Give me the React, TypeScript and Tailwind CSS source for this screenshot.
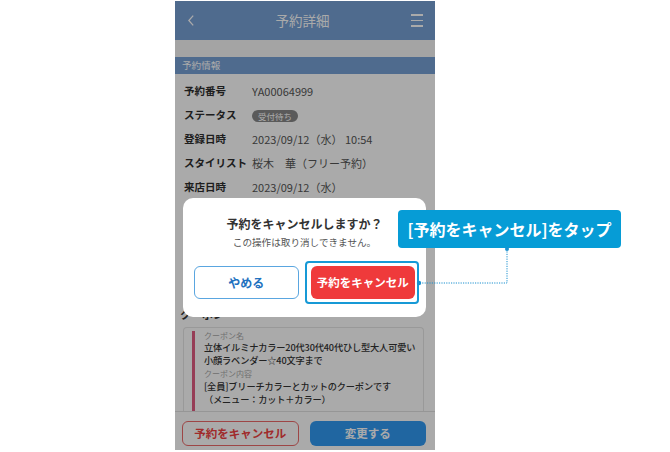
import React from "react";

const ROWS: { label: string; value: React.ReactNode }[] = [
  { label: "予約番号", value: "YA00064999" },
  {
    label: "ステータス",
    value: (
      <span className="inline-flex h-[12px] items-center rounded-full bg-[#878787] px-[6px] text-[8.5px] leading-none text-white">
        受付待ち
      </span>
    ),
  },
  { label: "登録日時", value: "2023/09/12（水） 10:54" },
  { label: "スタイリスト", value: "桜木　華（フリー予約）" },
];

const COUPON_LINES: { kind: "label" | "text"; body: string }[] = [
  { kind: "label", body: "クーポン名" },
  { kind: "text", body: "立体イルミナカラー20代30代40代ひし型大人可愛い" },
  { kind: "text", body: "小顔ラベンダー☆40文字まで" },
  { kind: "label", body: "クーポン内容" },
  { kind: "text", body: "[全員]ブリーチカラーとカットのクーポンです" },
  { kind: "text", body: "（メニュー：カット＋カラー）" },
];

function Header() {
  return (
    <div className="flex h-[39px] shrink-0 items-center justify-between bg-[#77a1d6] pl-[13px] pr-[12px]">
      <svg width="6" height="11" viewBox="0 0 6 11" fill="none">
        <polyline points="5.2,0.6 0.8,5.5 5.2,10.4" stroke="#fff" strokeWidth="1.3" />
      </svg>
      <span className="text-[13.5px] leading-none text-white">予約詳細</span>
      <div className="flex w-[12px] flex-col gap-[4px]">
        <span className="h-[1.5px] bg-white" />
        <span className="h-[1.5px] bg-white" />
        <span className="h-[1.5px] bg-white" />
      </div>
    </div>
  );
}

function Footer() {
  return (
    <div className="grid h-[39px] shrink-0 grid-cols-2 gap-[11px] border-t border-[#e2e2e2] bg-white pl-[7px] pr-[9px] pt-[9px]">
      <button className="flex h-[25px] items-center justify-center rounded-[6px] border border-[#ec6a6a] text-[11.5px] font-bold text-[#f04141]">
        予約をキャンセル
      </button>
      <button className="flex h-[25px] items-center justify-center rounded-[6px] bg-[#3199f2] text-[11.5px] font-bold text-white">
        変更する
      </button>
    </div>
  );
}

function CouponCard() {
  return (
    <div className="ml-[8px] mr-[11px] mt-[5px] h-[100px] overflow-hidden rounded-t-[4px] border border-b-0 border-[#e6e6e6] pl-[8px] pt-[3px]">
      <div className="h-[100px] border-l-[3px] border-[#e15c82] pl-[9px]">
        {COUPON_LINES.map((l, i) =>
          l.kind === "label" ? (
            <p key={i} className={`text-[8px] text-[#a9a9a9] ${i === 0 ? "leading-[10px]" : "leading-[13px]"}`}>
              {l.body}
            </p>
          ) : (
            <p key={i} className="whitespace-nowrap text-[9.2px] font-medium leading-[13px] tracking-[-0.15px] text-[#333]">
              {l.body}
            </p>
          )
        )}
      </div>
    </div>
  );
}

function ConfirmDialog() {
  return (
    <div className="absolute left-[8px] top-[197px] h-[119px] w-[243px] rounded-[10px] bg-white px-[11px] pt-[18px]">
      <p className="text-center text-[12px] font-bold leading-[16px] text-[#333]">予約をキャンセルしますか？</p>
      <p className="mt-[3px] text-center text-[9.6px] leading-[14px] text-[#555]">この操作は取り消しできません。</p>
      <div className="mt-[17px] grid grid-cols-2 gap-[12px]">
        <button className="flex h-[33px] items-center justify-center rounded-[6px] border border-[#5aa6e0] text-[12px] font-bold text-[#1f72c0]">
          やめる
        </button>
        <button className="flex h-[33px] items-center justify-center rounded-[6px] bg-[#ef3a3b] text-[11.5px] font-bold text-white">
          予約をキャンセル
        </button>
      </div>
    </div>
  );
}

export default function App() {
  return (
    <div className="relative h-[452px] w-[670px] overflow-hidden bg-white font-['Noto_Sans_CJK_JP',sans-serif]">
      {/* phone */}
      <div className="relative ml-[175px] mt-[1px] flex h-[449px] w-[260px] flex-col overflow-hidden bg-white">
        <Header />
        <div className="flex-1 overflow-hidden">
          <div className="h-[17px] bg-[#f6f6f6]" />
          <div className="h-[17px] bg-[#77a1d6] pl-[7px] text-[9.6px] leading-[17px] text-white">予約情報</div>
          <div className="pl-[9px] pt-[5px]">
            {ROWS.map((r) => (
              <div key={r.label} className="flex h-[24px] items-center">
                <span className="w-[68px] shrink-0 text-[10.5px] font-bold text-[#2e2e2e]">{r.label}</span>
                <span className="text-[11px] text-[#555]">{r.value}</span>
              </div>
            ))}
            <div className="flex pt-[5px]">
              <span className="w-[68px] shrink-0 text-[10.5px] font-bold leading-[14px] text-[#2e2e2e]">来店日時</span>
              <div className="text-[11px] leading-[14px] text-[#555]">
                <p>2023/09/12（水）</p>
              </div>
            </div>
          </div>
          <p className="ml-[5px] mt-[112px] text-[11px] font-bold leading-[16px] text-[#333]">クーポン</p>
          <CouponCard />
        </div>
        <Footer />

        {/* modal backdrop */}
        <div className="absolute inset-0 bg-black/[0.333]" />
        <ConfirmDialog />
      </div>

      {/* annotation */}
      <div className="absolute left-[305px] top-[261px] h-[43px] w-[114px] rounded-[4px] border-2 border-[#1699d6]" />
      <div className="absolute left-[398px] top-[210px] flex h-[38px] w-[223px] items-center justify-center rounded-[4px] bg-[#069cd6] text-[16px] font-bold text-white">
        [予約をキャンセル]をタップ
      </div>
      <svg className="absolute left-[415px] top-[245px]" width="96" height="42" viewBox="0 0 96 42" fill="none">
        <path d="M92 4 V38 H4" stroke="#1a90cf" strokeWidth="1" strokeDasharray="1.2 1.2" />
        <circle cx="92" cy="4" r="2" fill="#1a90cf" />
        <circle cx="4" cy="38" r="2.2" fill="#1a90cf" />
      </svg>
    </div>
  );
}
